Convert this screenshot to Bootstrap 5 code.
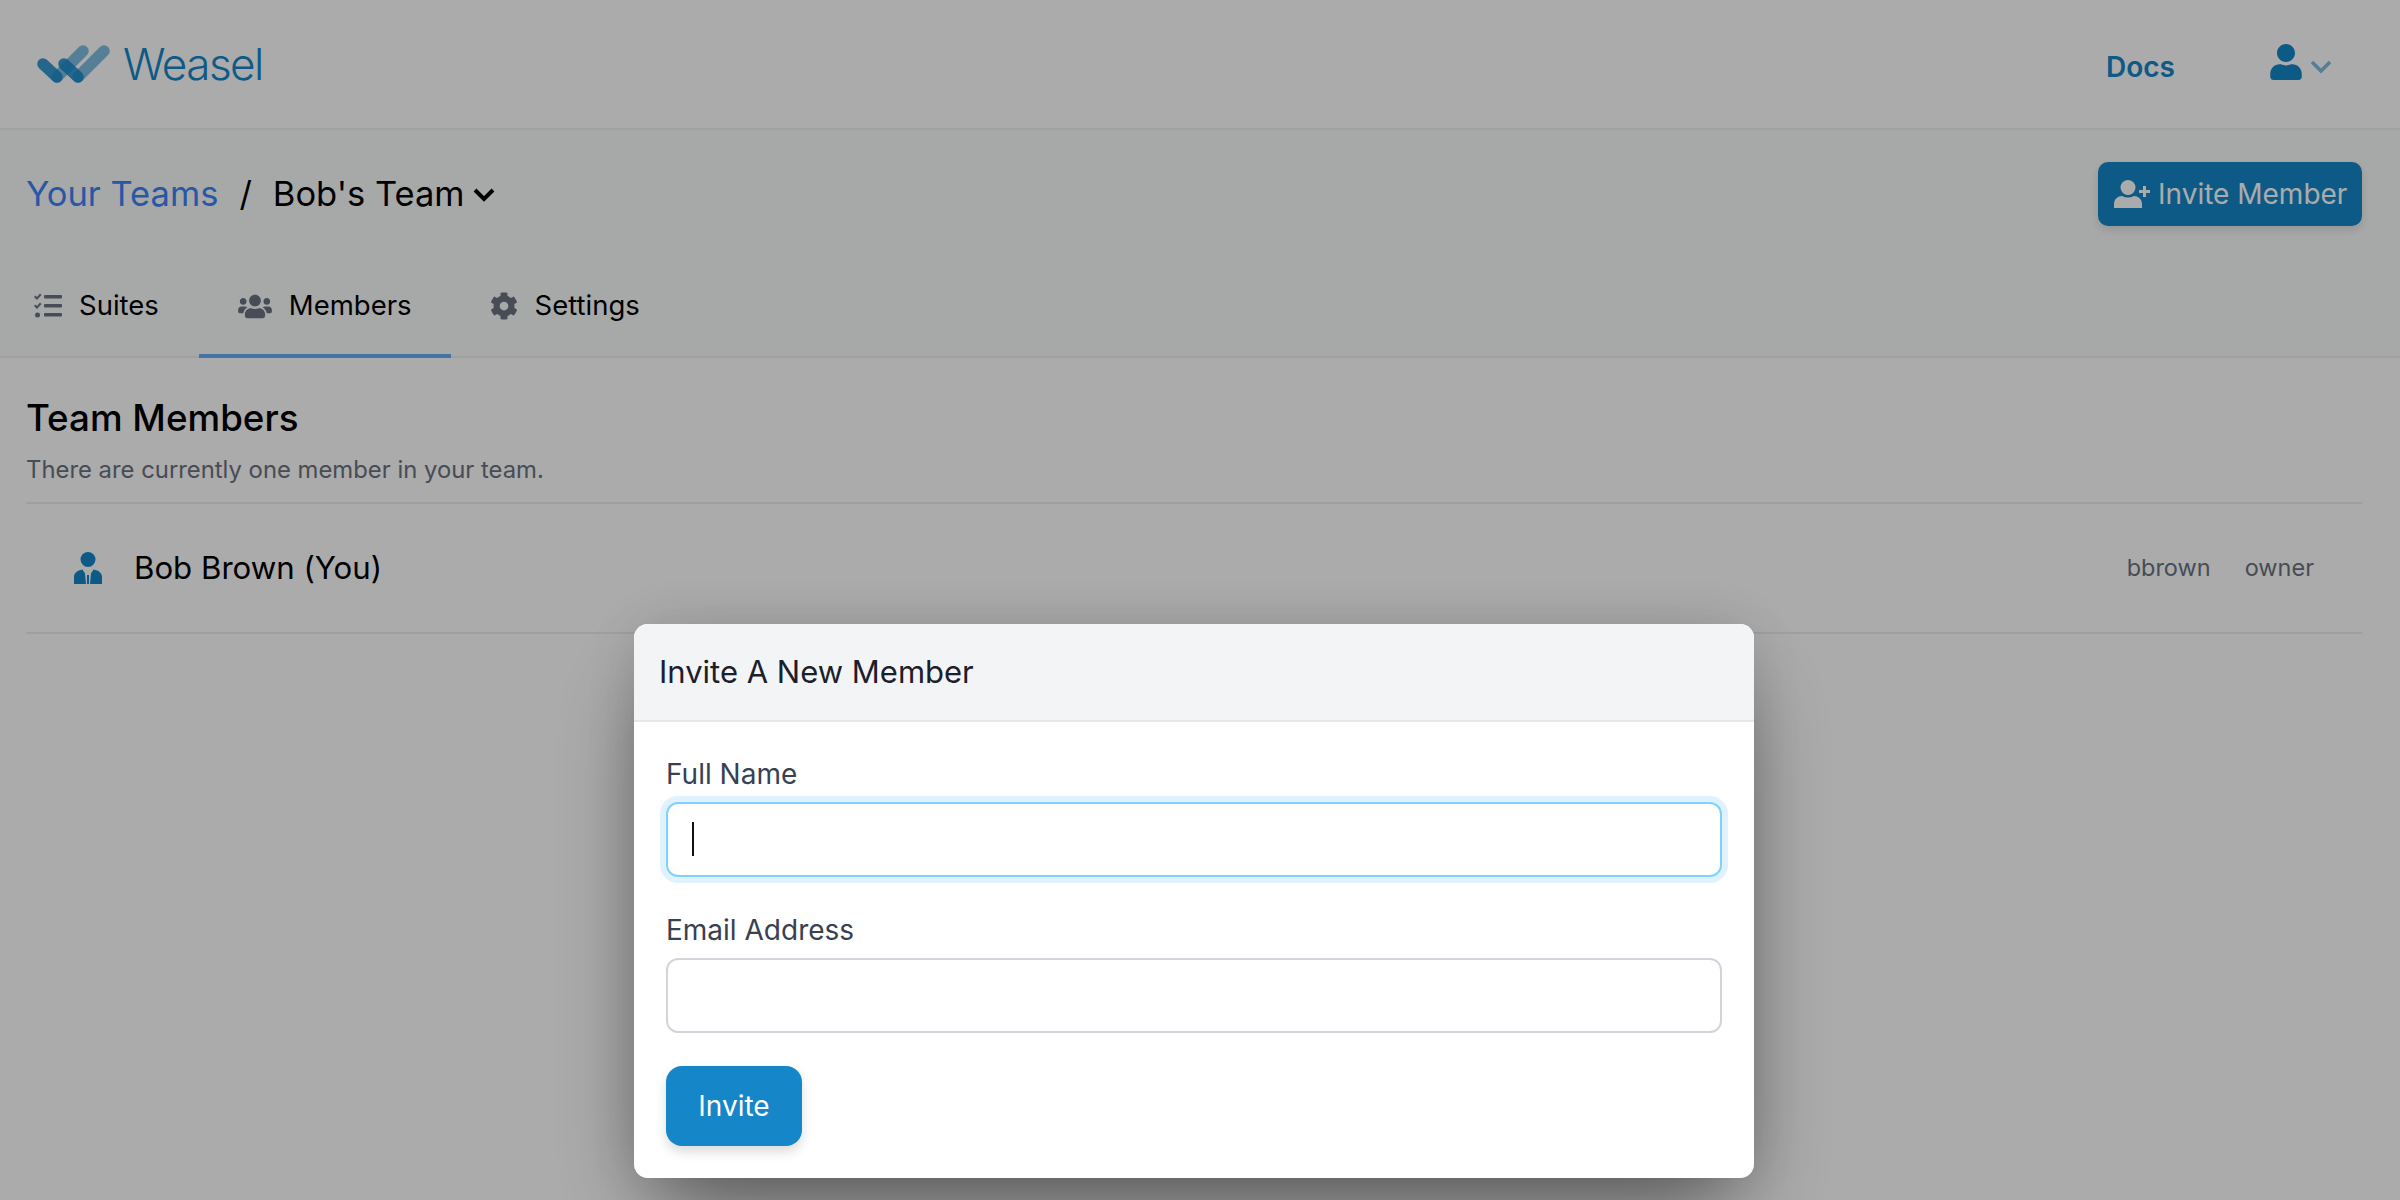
<!DOCTYPE html>
<html lang="en">
<head>
  <meta charset="UTF-8">
  <title>Weasel - Members</title>
  <link href="https://cdn.jsdelivr.net/npm/bootstrap@5.3.0/dist/css/bootstrap.min.css" rel="stylesheet">
  <style>
    body {
      font-family: Inter, "Liberation Sans", sans-serif;
      font-size: 28px;
      color: #000;
      background-color: #fff;
    }
    .top-bar {
      height: 130px;
      padding: 5px 68px 0 37px;
      border-bottom: 2px solid #f0f0f0;
    }
    .brand-link {
      margin-bottom: 5px;
    }
    .brand-name {
      font-size: 44px;
      font-weight: 300;
      letter-spacing: -1.5px;
      color: #1586c8;
      margin-left: 13px;
    }
    .docs-link {
      font-weight: 600;
      color: #1586c8;
      text-decoration: none;
      margin-right: 95px;
    }
    .user-glyph {
      margin-bottom: 9px;
    }
    .team-band {
      background-color: #fafdfc;
      border-bottom: 2px solid #edf0f0;
    }
    .team-head {
      padding: 32px 38px 32px 26px;
    }
    .team-title {
      font-size: 34.500px;
      line-height: 64px;
    }
    .team-title a {
      color: #3b82f6;
      text-decoration: none;
    }
    .team-title .slash {
      margin: 0 21px;
    }
    .invite-top {
      height: 64px;
      width: 264px;
      padding: 0 0 0 16px;
      font-size: 28px;
      border-radius: 10px;
      border: 0;
      background-color: #1586c8;
      color: #fff;
      box-shadow: 0 4px 10px rgba(0, 0, 0, .12);
    }
    .tab-row {
      height: 98px;
    }
    .tab-link {
      height: 100px;
      padding: 0 40px 0 39px;
      color: #000;
      text-decoration: none;
      font-size: 27.500px;
      border-bottom: 4px solid transparent;
    }
    .tab-link:first-child {
      padding-left: 34px;
    }
    .tab-link.is-on {
      padding-right: 39px;
      border-bottom-color: #6aaaf5;
    }
    .tab-link svg {
      fill: #6b7280;
      margin-right: 17px;
    }
    .members-box {
      padding: 0 38px 0 26px;
    }
    .members-title {
      font-size: 36.750px;
      font-weight: 500;
      line-height: 49px;
      margin: 35px 0 10px;
    }
    .members-sub {
      font-size: 23.850px;
      line-height: 36px;
      color: #6b7280;
      padding-bottom: 14px;
      border-bottom: 2px solid #edeef0;
    }
    .member-line {
      height: 130px;
      padding: 0 48px;
      border-bottom: 2px solid #edeef0;
    }
    .member-name {
      font-size: 31.200px;
      margin-left: 32px;
    }
    .member-meta {
      font-size: 23.500px;
      gap: 34px;
      color: #6b7280;
    }
    .invite-overlay {
      position: fixed;
      top: 0;
      left: 0;
      right: 0;
      bottom: 0;
      z-index: 1050;
      padding: 0 12px 22px 0;
      background-color: rgba(0, 0, 0, .33);
    }
    .invite-box {
      width: 1120px;
      background-color: #fff;
      border-radius: 14px;
      overflow: hidden;
    }
    .invite-shadow {
      border-radius: 14px;
      box-shadow: 0 44px 88px -21px rgba(0, 0, 0, .5), 0 0 60px rgba(0, 0, 0, .12);
    }
    .invite-head {
      height: 98px;
      padding: 0 25px;
      font-size: 31px;
      color: #1a202c;
      background-color: #f3f4f6;
      border-bottom: 2px solid #e5e7eb;
    }
    .invite-body {
      padding: 32px;
    }
    .invite-body .form-label {
      font-size: 28px;
      line-height: 40px;
      font-weight: 400;
      color: #374151;
      margin-bottom: 8px;
    }
    .invite-body .form-control {
      height: 75px;
      font-size: 28px;
      border: 2px solid #d1d5db;
      border-radius: 12px;
    }
    .invite-body .form-control.is-focus {
      border-color: #7dd3fc;
      box-shadow: 0 0 0 6px #e0f2fe;
    }
    .text-caret {
      position: absolute;
      left: 26px;
      top: 20px;
      width: 2px;
      height: 34px;
      background-color: #111;
    }
    .invite-send {
      height: 80px;
      width: 136px;
      font-size: 28px;
      border: 0;
      border-radius: 16px;
      background-color: #1586c8;
      color: #fff;
      box-shadow: 0 6px 12px rgba(0, 0, 0, .14);
    }
    .field-first {
      margin-bottom: 33px;
    }
    .field-second {
      margin-bottom: 33px;
    }
  </style>
</head>
<body>
  <nav class="top-bar d-flex align-items-center justify-content-between">
    <a href="#" class="brand-link d-flex align-items-center text-decoration-none">
      <svg width="73" height="40" viewBox="0 0 73 40" fill="none" stroke="#1586c8" stroke-width="11.500" stroke-linecap="round">
        <path d="M20 33 L46 7" opacity=".55"/>
        <path d="M41 33 L67 7" opacity=".55"/>
        <path d="M6 20 L20 33" opacity=".85"/>
        <path d="M27 20 L41 33" opacity=".85"/>
      </svg>
      <span class="brand-name">Weasel</span>
    </a>
    <div class="d-flex align-items-center">
      <a href="#" class="docs-link">Docs</a>
      <svg class="user-glyph" width="32" height="36" viewBox="0 0 448 512" fill="#1586c8"><path d="M224 256c70.700 0 128-57.300 128-128S294.700 0 224 0 96 57.300 96 128s57.300 128 128 128zm89.600 32h-16.700c-22.200 10.200-46.900 16-72.900 16s-50.600-5.800-72.900-16h-16.700C60.200 288 0 348.200 0 422.400V464c0 26.500 21.500 48 48 48h352c26.500 0 48-21.500 48-48v-41.600c0-74.200-60.200-134.400-134.400-134.400z"/></svg>
      <svg class="ms-2" width="22" height="14" viewBox="0 0 22 14" fill="none" stroke="#1586c8" stroke-width="3.500" opacity=".55"><path d="M2 2 L11 11 L20 2"/></svg>
    </div>
  </nav>

  <section class="team-band">
    <div class="team-head d-flex align-items-center justify-content-between">
      <div class="team-title d-flex align-items-center">
        <a href="#">Your Teams</a>
        <span class="slash">/</span>
        <span>Bob's Team</span>
        <svg class="ms-2" width="22" height="15" viewBox="0 0 22 15" fill="none" stroke="#000" stroke-width="4"><path d="M2 3 L11 12 L20 3"/></svg>
      </div>
      <button class="btn invite-top d-flex align-items-center text-nowrap">
        <svg class="me-2 flex-shrink-0" width="36" height="28" viewBox="0 0 36 28" fill="#fff"><circle cx="14" cy="7.500" r="7.500"/><path d="M0 28 v-4 c0-5 4-8 8-8 c4 2 8 2 12 0 c4 0 8 3 8 8 v4 z"/><path d="M29 6 h3 v4 h4 v3 h-4 v4 h-3 v-4 h-4 v-3 h4 z"/></svg>
        <span>Invite Member</span>
      </button>
    </div>
    <div class="tab-row d-flex">
      <a href="#" class="tab-link d-flex align-items-center">
        <svg width="28" height="26" viewBox="0 0 28 26"><path d="M0 4 L1.500 2.500 L3 4 L6 0.500 L7.500 2 L3 7 Z M0 13 L1.500 11.500 L3 13 L6 9.500 L7.500 11 L3 16 Z"/><circle cx="3.500" cy="22" r="2.500"/><rect x="10" y="2" width="18" height="3.500" rx="1"/><rect x="10" y="11" width="18" height="3.500" rx="1"/><rect x="10" y="20" width="18" height="3.500" rx="1"/></svg>
        <span>Suites</span>
      </a>
      <a href="#" class="tab-link is-on d-flex align-items-center">
        <svg width="34" height="27" viewBox="0 0 640 512"><path d="M96 224c35.300 0 64-28.700 64-64s-28.700-64-64-64-64 28.700-64 64 28.700 64 64 64zm448 0c35.300 0 64-28.700 64-64s-28.700-64-64-64-64 28.700-64 64 28.700 64 64 64zm32 32h-64c-17.600 0-33.500 7.100-45.100 18.600 40.300 22.100 68.900 62 75.100 109.400h66c17.700 0 32-14.300 32-32v-32c0-35.300-28.700-64-64-64zm-256 0c61.900 0 112-50.100 112-112S381.900 32 320 32 208 82.100 208 144s50.100 112 112 112zm76.800 32h-8.300c-20.800 10-43.900 16-68.500 16s-47.600-6-68.500-16h-8.300C179.600 288 128 339.600 128 403.200V432c0 26.500 21.500 48 48 48h288c26.500 0 48-21.500 48-48v-28.800c0-63.600-51.600-115.200-115.200-115.200zm-223.700-13.400C161.500 263.100 145.600 256 128 256H64c-35.300 0-64 28.700-64 64v32c0 17.700 14.300 32 32 32h65.900c6.300-47.400 34.900-87.300 75.200-109.400z"/></svg>
        <span>Members</span>
      </a>
      <a href="#" class="tab-link d-flex align-items-center">
        <svg width="28" height="28" viewBox="0 0 512 512"><path d="M487.400 315.700l-42.600-24.600c4.300-23.200 4.300-47 0-70.200l42.600-24.600c4.900-2.800 7.100-8.600 5.500-14-11.100-35.600-30-67.800-54.700-94.600-3.800-4.100-10-5.100-14.800-2.300L380.800 110c-17.900-15.400-38.500-27.300-60.800-35.100V25.800c0-5.600-3.900-10.500-9.400-11.700-36.700-8.200-74.300-7.800-109.200 0-5.500 1.200-9.400 6.100-9.400 11.700V75c-22.200 7.900-42.800 19.800-60.800 35.100L88.700 85.500c-4.900-2.800-11-1.900-14.800 2.300-24.700 26.700-43.600 58.900-54.700 94.600-1.700 5.400.6 11.200 5.500 14L67.300 221c-4.300 23.200-4.300 47 0 70.200l-42.600 24.600c-4.900 2.800-7.100 8.600-5.500 14 11.100 35.600 30 67.800 54.700 94.600 3.800 4.100 10 5.100 14.800 2.300l42.600-24.600c17.900 15.400 38.500 27.300 60.800 35.100v49.200c0 5.600 3.900 10.500 9.400 11.700 36.700 8.200 74.300 7.800 109.200 0 5.500-1.200 9.400-6.100 9.400-11.700v-49.200c22.200-7.900 42.800-19.800 60.800-35.100l42.600 24.600c4.900 2.800 11 1.900 14.800-2.300 24.700-26.700 43.600-58.900 54.700-94.600 1.500-5.500-.7-11.300-5.600-14.100zM256 336c-44.100 0-80-35.900-80-80s35.900-80 80-80 80 35.900 80 80-35.900 80-80 80z"/></svg>
        <span>Settings</span>
      </a>
    </div>
  </section>

  <section class="members-box">
    <h2 class="members-title">Team Members</h2>
    <div class="members-sub">There are currently one member in your team.</div>
    <div class="member-line d-flex align-items-center justify-content-between">
      <div class="d-flex align-items-center">
        <svg width="28" height="32" viewBox="0 0 28 32" fill="#1586c8"><circle cx="14" cy="7.500" r="7.500"/><path d="M0 32 v-7 c0-4 3-6.500 8.500-7.500 l2.500 4 l1 10.500 Z M28 32 v-7 c0-4-3-6.500-8.500-7.500 l-2.500 4 l-1 10.500 Z M13 32 l0-9 h2 l0 9 Z"/></svg>
        <span class="member-name">Bob Brown (You)</span>
      </div>
      <div class="member-meta d-flex">
        <span>bbrown</span>
        <span>owner</span>
      </div>
    </div>
  </section>

  <div class="invite-overlay d-flex align-items-end justify-content-center">
    <div class="invite-shadow">
      <div class="invite-box">
        <div class="invite-head d-flex align-items-center">Invite A New Member</div>
        <form class="invite-body">
          <div class="field-first">
            <label class="form-label d-block" for="fullName">Full Name</label>
            <div class="position-relative">
              <input id="fullName" type="text" class="form-control is-focus">
              <span class="text-caret"></span>
            </div>
          </div>
          <div class="field-second">
            <label class="form-label d-block" for="emailAddr">Email Address</label>
            <input id="emailAddr" type="email" class="form-control">
          </div>
          <button type="button" class="btn invite-send">Invite</button>
        </form>
      </div>
    </div>
  </div>

  <script src="https://cdn.jsdelivr.net/npm/bootstrap@5.3.0/dist/js/bootstrap.bundle.min.js"></script>
</body>
</html>
